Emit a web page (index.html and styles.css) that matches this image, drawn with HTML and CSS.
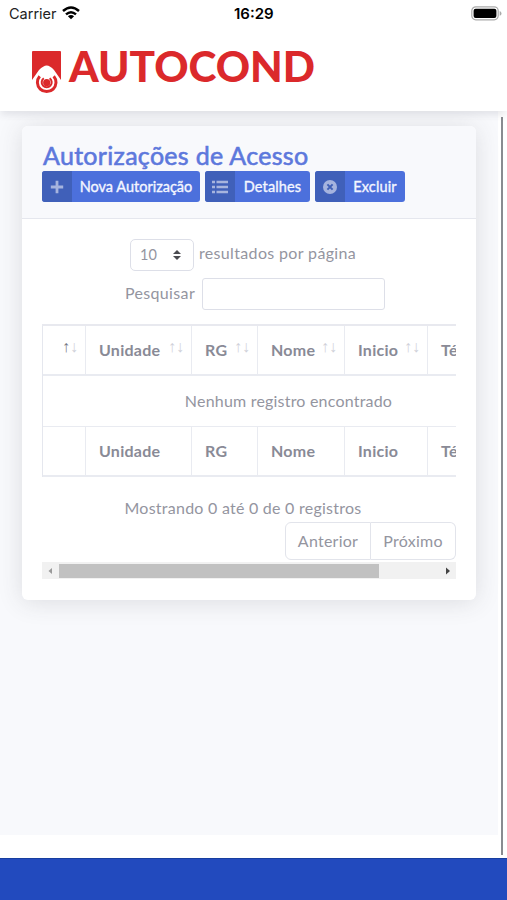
FILE: index.html
```html
<!DOCTYPE html>
<html lang="pt-BR">
<head>
<meta charset="utf-8">
<title>Autocond</title>
<link rel="stylesheet" href="styles.css">
</head>
<body>
<div class="status">
  <span class="carrier">Carrier</span>
  <svg class="wifi" viewBox="0 0 18 14" width="18" height="14"><g fill="none" stroke="#000" stroke-width="2.5"><path d="M1 5Q9-2 17 5"/><path d="M4 8.4Q9 4 14 8.4"/></g><path d="M9 13.2 5.9 10.2Q9 7.8 12.1 10.2Z"/></svg>
  <span class="clock">16:29</span>
  <svg class="battery" viewBox="0 0 31 15" width="31" height="15"><rect x=".8" y=".8" width="26.4" height="13" rx="4" fill="#fff" stroke="#aaa" stroke-width="1.2"/><rect x="2.6" y="2.7" width="22.8" height="9.2" rx="2" fill="#000"/><path d="M28.7 5v4.8q1.8-.7 1.8-2.4T28.700 5Z" fill="#aaa"/></svg>
</div>
<header class="brand">
  <svg width="290" height="50" viewBox="0 0 290 50">
    <path fill="#db292b" d="M3 1H30Q31 1 31 2V30L24 20Q20 15.500 16.700 15.500T9 20L2 30V2Q2 1 3 1Z"/>
    <path d="M9.700 26.200A9.300 9.300 0 1 0 23.700 26.200" fill="none" stroke="#db292b" stroke-width="3"/>
    <path d="M13.800 28.300A5 5 0 1 0 19.600 28.300" fill="none" stroke="#db292b" stroke-width="2"/>
    <circle cx="16.700" cy="32.700" r="3.600" fill="#db292b"/>
    <text class="wordmark" x="39" y="32" textLength="246" lengthAdjust="spacingAndGlyphs">AUTOCOND</text>
  </svg>
</header>
<main class="content">
  <section class="card">
    <div class="card-head">
      <h1>Autorizações de Acesso</h1>
      <div class="actions">
        <button class="btn nova"><span class="icon"><svg width="14" height="14" viewBox="0 0 14 14"><path d="M7 .8v12.400M.8 7h12.400" stroke="currentColor" stroke-width="2.800"/></svg></span><span class="text">Nova Autorização</span></button>
        <button class="btn detalhes"><span class="icon"><svg width="16" height="14" viewBox="0 0 16 14"><path d="M0 2h3M0 7h3M0 12h3M4.500 2H16M4.500 7H16M4.500 12H16" stroke="currentColor" stroke-width="2.300"/></svg></span><span class="text">Detalhes</span></button>
        <button class="btn excluir"><span class="icon"><svg width="14" height="14" viewBox="0 0 14 14"><circle cx="7" cy="7" r="7" fill="currentColor"/><path d="m4.400 4.400 5.200 5.200m0-5.200L4.400 9.600" stroke="#4060b6" stroke-width="2"/></svg></span><span class="text">Excluir</span></button>
      </div>
    </div>
    <div class="card-body">
      <div class="length"><span class="select">10<svg width="8" height="10" viewBox="0 0 8 10"><path d="M0 4 4 0l4 4ZM0 6l4 4 4-4Z" fill="#4a4b50"/></svg></span><span class="results">resultados por página</span></div>
      <label class="search"><span>Pesquisar</span><input type="text"></label>
      <div class="table-wrap">
        <table>
          <colgroup><col class="c0"><col class="c1"><col class="c2"><col class="c3"><col class="c4"><col class="c5"></colgroup>
          <thead><tr><th><i class="sort asc"><b>↑</b>↓</i></th><th>Unidade<i class="sort"><span>↑</span>↓</i></th><th>RG<i class="sort"><span>↑</span>↓</i></th><th>Nome<i class="sort"><span>↑</span>↓</i></th><th>Inicio<i class="sort"><span>↑</span>↓</i></th><th>Término</th></tr></thead>
          <tbody><tr><td colspan="6">Nenhum registro encontrado</td></tr></tbody>
          <tfoot><tr><th></th><th>Unidade</th><th>RG</th><th>Nome</th><th>Inicio</th><th>Término</th></tr></tfoot>
        </table>
      </div>
      <p class="info">Mostrando 0 até 0 de 0 registros</p>
      <div class="pages"><span class="prev">Anterior</span><span class="next">Próximo</span></div>
      <div class="scrollbar"><svg width="17" height="16" viewBox="0 0 17 16"><path d="M10 5v6L6.500 8Z" fill="#999"/></svg><span class="thumb"></span><svg class="right" width="17" height="16" viewBox="0 0 17 16"><path d="M7 4.500v7L11 8Z" fill="#444"/></svg></div>
    </div>
  </section>
</main>
<div class="page-scroll"></div>
<footer></footer>
</body>
</html>
```
FILE: styles.css
```css
* { box-sizing: border-box; }
body { margin: 0; width: 507px; height: 900px; overflow: hidden; background: #fff; font: 16px/24px Lato, "Open Sans", sans-serif; letter-spacing: .25px; color: #94959f; display: flex; flex-direction: column; position: relative; }
.status { height: 28px; padding: 0 6px 0 9px; display: grid; grid-template-columns: 53px 172px 237px 31px; align-items: center; font: 14.5px/28px Inter, sans-serif; letter-spacing: 0; color: #222; flex: none; }
.wifi { margin-top: -2px; }
.battery { margin-top: -1px; }
.clock { font-weight: 600; font-size: 15px; color: #000; }
.brand { height: 83px; padding: 22px 0 0 30px; flex: none; background: #fff; box-shadow: 0 5px 7px -1px rgba(58,59,69,.11); z-index: 1; }
.brand svg { display: block; overflow: visible; }
.wordmark { font: 900 42px Lato, sans-serif; fill: #db292b; letter-spacing: 0; }
.content { width: 498px; height: 724px; flex: none; background: #f8f9fc; padding: 15px 22px; }
.card { width: 454px; height: 474px; border-radius: 6px; background: #fff; box-shadow: 0 2px 24px rgba(58,59,69,.15); }
.card-head { height: 93px; padding: 15px 20px 0; border-bottom: 1px solid #e5e7ee; background: #f8f9fc; border-radius: 6px 6px 0 0; }
h1 { margin: 0 0 1px 1px; font-size: 25px; line-height: 29px; font-weight: 400; letter-spacing: .3px; color: #5d78dc; -webkit-text-stroke: .6px #5d78dc; white-space: nowrap; }
.actions { display: flex; gap: 5px; }
.btn { height: 31px; border: 0; padding: 0; border-radius: 3px; overflow: hidden; background: #4c70dc; color: #f4f6ff; font: 400 14.5px/31px Lato, sans-serif; letter-spacing: .15px; display: flex; -webkit-text-stroke: .35px #f4f6ff; white-space: nowrap; }
.nova { width: 158px; }
.detalhes { width: 105px; }
.excluir { width: 90px; }
.icon { width: 30px; height: 31px; flex: none; background: #4060b9; color: #a6b4de; display: flex; align-items: center; justify-content: center; }
.text { flex: 1; text-align: center; }
.nova .text { letter-spacing: 0; }
.card-body { padding: 20px 20px 0; }
.length { height: 32px; display: flex; justify-content: center; gap: 5px; padding-right: 12px; }
.select { width: 64px; height: 32px; border: 1px solid #dddfe8; border-radius: 5px; padding: 0 12px 0 9px; display: flex; align-items: center; justify-content: space-between; font-size: 14.5px; }
.results { padding-top: 2px; letter-spacing: .35px; }
.search { margin-top: 7px; display: flex; justify-content: center; align-items: center; gap: 7px; padding-left: 12px; letter-spacing: .35px; }
.search span { margin-top: -2px; }
.search input { width: 183px; height: 32px; border: 1.500px solid #dddfe8; border-radius: 3px; padding: 0; background: #fff; }
.table-wrap { margin: 14px 0 0; width: 414px; height: 153px; overflow: hidden; border-top: 2px solid #e8e9ef; }
table { width: 513px; table-layout: fixed; border-collapse: separate; border-spacing: 0; border-left: 1px solid #e5e7ee; }
.c0 { width: 43px; }
.c1 { width: 106px; }
.c2 { width: 66px; }
.c3 { width: 87px; }
.c4 { width: 83px; }
.c5 { width: 127px; }
th, td { height: 50px; padding: 0 0 0 13px; text-align: left; border-right: 1px solid #e9ebf1; border-bottom: 1px solid #e9ebf1; position: relative; white-space: nowrap; }
th { color: #898a96; }
thead th { border-bottom-width: 2px; }
td { height: 51px; padding: 0 20px 0 0; text-align: center; letter-spacing: .2px; }
tfoot th { border-bottom-width: 2px; }
.sort { position: absolute; right: 8px; top: 9px; width: 15px; display: flex; justify-content: space-between; font: normal 16px/24px "Liberation Serif", serif; letter-spacing: 0; color: #d0d1d9; }
.sort b { font-weight: 400; color: #777985; }
.info { margin: 19px 0 2px; padding-right: 12px; text-align: center; letter-spacing: .25px; }
.pages { display: flex; justify-content: flex-end; }
.pages span { height: 38px; border: 1px solid #e2e4eb; line-height: 36px; text-align: center; }
.prev { width: 86px; border-radius: 6px 0 0 6px; }
.pages .next { width: 85px; border-left: 0; border-radius: 0 6px 6px 0; }
.scrollbar { margin-top: 2px; height: 17px; background: #f1f1f1; display: flex; align-items: center; }
.thumb { width: 320px; height: 14px; background: #c1c1c1; }
.right { margin-left: auto; }
.page-scroll { position: absolute; left: 501px; top: 117px; width: 1.500px; height: 738px; background: #898b90; }
footer { margin-top: 23px; height: 42px; flex: none; background: #224abe; border-top: 1px solid #173e9f; }
```
